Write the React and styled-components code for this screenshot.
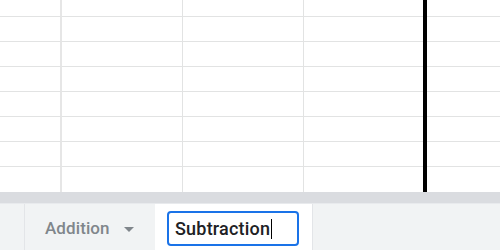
import React from "react";
import styled, { createGlobalStyle } from "styled-components";

const Global = createGlobalStyle`
  html, body { margin: 0; padding: 0; background: #fff; }
  body { width: 500px; height: 250px; overflow: hidden; font-family: Roboto, "Liberation Sans", sans-serif; }
`;

const Page = styled.div`
  position: relative;
  width: 500px;
  height: 250px;
  display: flex;
  flex-direction: column;
`;

const Sheet = styled.div`
  position: relative;
  height: 192px;
  display: grid;
  grid-template-columns: 62px 121px 121px 121px 1fr;
  grid-template-rows: 17px repeat(6, 25px) 25px;
  overflow: hidden;
`;

const Cell = styled.div`
  box-sizing: border-box;
  border-bottom: ${(p) => (p.$last ? "none" : "1px solid #e2e3e3")};
  border-right: ${(p) =>
    p.$edge ? "2px solid #e6e6e6" : p.$end ? "none" : "1px solid #e2e3e3"};
  background: #fff;
`;

const ResizeBar = styled.div`
  position: absolute;
  left: 423px;
  top: 0;
  width: 4px;
  height: 192px;
  background: #000;
`;

const Scrollbar = styled.div`
  height: 11px;
  background: #dadce0;
  border-bottom: 1px solid #e8eaed;
`;

const TabBar = styled.div`
  flex: 1;
  display: flex;
  align-items: stretch;
  background: #f1f3f4;
`;

const Lead = styled.div`
  width: 24px;
  border-right: 1px solid #e3e5e8;
`;

const Tab = styled.div`
  box-sizing: border-box;
  width: ${(p) => p.$w}px;
  display: flex;
  align-items: center;
  padding-left: ${(p) => p.$pad}px;
  background: ${(p) => (p.$active ? "#fff" : "transparent")};
  border-right: 1px solid ${(p) => (p.$active ? "#e3e5e8" : "transparent")};
`;

const TabLabel = styled.span`
  font-family: Roboto, "Liberation Sans", sans-serif;
  font-weight: 500;
  font-size: 17px;
  color: #80868b;
  letter-spacing: 0.1px;
  padding-top: 2px;
`;

const Caret = styled.svg`
  margin-left: 14px;
  margin-top: 4px;
`;

const NameBox = styled.div`
  box-sizing: border-box;
  margin-top: 3px;
  width: 132px;
  height: 35px;
  border: 2px solid #1a73e8;
  border-radius: 4px;
  background: #fff;
  display: flex;
  align-items: center;
  padding-left: 6px;
  font-family: Roboto, "Liberation Sans", sans-serif;
  font-size: 18px;
  font-weight: 500;
  color: #202124;
  letter-spacing: 0.2px;
`;

const TextCursor = styled.span`
  display: inline-block;
  width: 1px;
  height: 20px;
  background: #000;
  margin-left: 1px;
`;

export default function App() {
  const rows = 8;
  const cols = 5;
  const cells = [];
  for (let r = 0; r < rows; r++) {
    for (let c = 0; c < cols; c++) {
      cells.push(
        <Cell
          key={`${r}-${c}`}
          $edge={c === 0}
          $end={c === cols - 1}
          $last={r === rows - 1}
        />
      );
    }
  }
  return (
    <>
      <Global />
      <Page>
        <Sheet>
          {cells}
          <ResizeBar />
        </Sheet>
        <Scrollbar />
        <TabBar>
          <Lead />
          <Tab $w={130} $pad={20}>
            <TabLabel>Addition</TabLabel>
            <Caret width="10" height="5" viewBox="0 0 10 5">
              <path d="M0 0 L10 0 L5 5 Z" fill="#80868b" />
            </Caret>
          </Tab>
          <Tab $active $w={158} $pad={12}>
            <NameBox>
              Subtraction
              <TextCursor />
            </NameBox>
          </Tab>
        </TabBar>
      </Page>
    </>
  );
}
